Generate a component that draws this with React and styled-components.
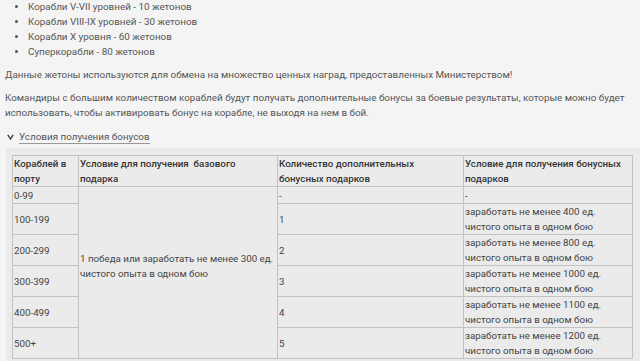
import React from "react";
import styled, { createGlobalStyle } from "styled-components";

const GlobalStyle = createGlobalStyle`
  html, body {
    margin: 0;
    padding: 0;
    background: #f4f4f4;
  }
  body {
    font-family: Roboto, "Liberation Sans", sans-serif;
    color: #555;
    font-size: 9.85px;
    overflow: hidden;
  }
`;

const Page = styled.div`
  padding: 0 0 0 5px;
  margin-top: -1px;
  width: 635px;
`;

const List = styled.ul`
  margin: 0;
  padding-left: 23px;
  line-height: 15px;
  list-style: disc;
`;

const Item = styled.li`
  padding-left: 0;
`;

const Para = styled.p`
  margin: 8px 0 0;
  line-height: 15px;
`;

const SpoilerHead = styled.div`
  display: flex;
  align-items: center;
  gap: 5px;
  margin-top: 10px;
  padding-left: 2px;
  line-height: 15px;
`;

const SpoilerTitle = styled.span`
  border-bottom: 1px solid #999;
  line-height: 13px;
`;

const SpoilerBody = styled.div`
  margin-top: 4px;
  margin-left: 1px;
  margin-right: -10px;
  background: #ebebeb;
  padding: 7px 0 10px 6px;
`;

const Table = styled.table`
  border-collapse: collapse;
  width: 621px;
  font-size: 9.75px;
  color: #444;
  table-layout: fixed;
`;

const Th = styled.th`
  border: 1px solid #c2c2c2;
  text-align: left;
  vertical-align: top;
  font-weight: 500;
  line-height: 15px;
  padding: 0 1px;
  color: #333;
`;

const Td = styled.td`
  border: 1px solid #c2c2c2;
  vertical-align: middle;
  line-height: 15px;
  padding: ${({ $tall }) => ($tall ? "0 1px" : "1px 1px 0")};
`;

const MergedTd = styled.td`
  border: 1px solid #c2c2c2;
  vertical-align: middle;
  line-height: 15px;
  padding: 0 1px 14px;
`;

const Chevron = () => (
  <svg width="7" height="6" viewBox="0 0 7 6">
    <path d="M0.8 0.8 L3.5 5 L6.2 0.8" fill="none" stroke="#444" strokeWidth="1.4" />
  </svg>
);

const rows = [
  ["0-99", "-", "-"],
  ["100-199", "1", "заработать не менее 400 ед. чистого опыта в одном бою"],
  ["200-299", "2", "заработать не менее 800 ед. чистого опыта в одном бою"],
  ["300-399", "3", "заработать не менее 1000 ед. чистого опыта в одном бою"],
  ["400-499", "4", "заработать не менее 1100 ед. чистого опыта в одном бою"],
  ["500+", "5", "заработать не менее 1200 ед. чистого опыта в одном бою"],
];

export default function App() {
  return (
    <>
      <GlobalStyle />
      <Page>
        <List>
          <Item>Корабли V-VII уровней - 10 жетонов</Item>
          <Item>Корабли VIII-IX уровней - 30 жетонов</Item>
          <Item>Корабли X уровня - 60 жетонов</Item>
          <Item>Суперкорабли - 80 жетонов</Item>
        </List>
        <Para>
          Данные жетоны используются для обмена на множество ценных наград, предоставленных Министерством!
        </Para>
        <Para>
          Командиры с большим количеством кораблей будут получать дополнительные бонусы за боевые результаты, которые можно будет использовать, чтобы активировать бонус на корабле, не выходя на нем в бой.
        </Para>
        <SpoilerHead>
          <Chevron />
          <SpoilerTitle>Условия получения бонусов</SpoilerTitle>
        </SpoilerHead>
        <SpoilerBody>
          <Table>
            <colgroup>
              <col style={{ width: 66 }} />
              <col style={{ width: 199 }} />
              <col style={{ width: 186 }} />
              <col style={{ width: 169 }} />
            </colgroup>
            <thead>
              <tr>
                <Th>Кораблей в<br />порту</Th>
                <Th>Условие для получения&nbsp; базового<br />подарка</Th>
                <Th>Количество дополнительных<br />бонусных подарков</Th>
                <Th>Условие для получения бонусных<br />подарков</Th>
              </tr>
            </thead>
            <tbody>
              {rows.map((r, i) => (
                <tr key={r[0]}>
                  <Td $tall={i > 0}>{r[0]}</Td>
                  {i === 0 && (
                    <MergedTd rowSpan={6}>1 победа или заработать не менее 300 ед. чистого опыта в одном бою</MergedTd>
                  )}
                  <Td $tall={i > 0}>{r[1]}</Td>
                  <Td $tall={i > 0}>{r[2]}</Td>
                </tr>
              ))}
            </tbody>
          </Table>
        </SpoilerBody>
      </Page>
    </>
  );
}
